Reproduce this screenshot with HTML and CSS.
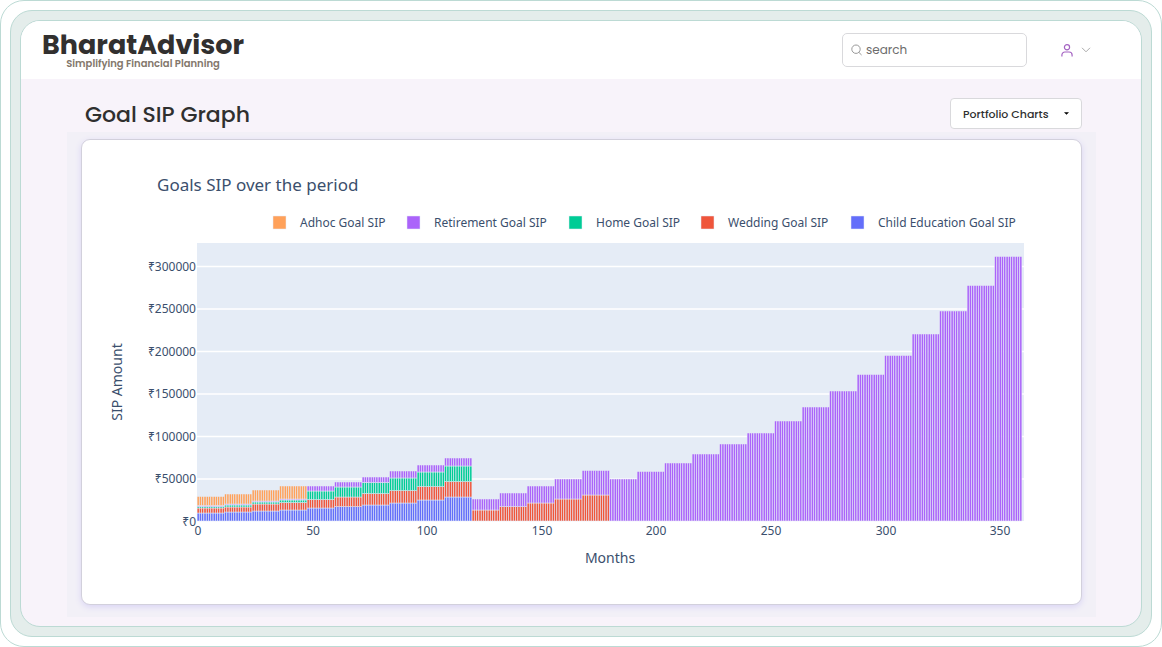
FILE: index.html
```html
<!DOCTYPE html>
<html lang="en">
<head>
<meta charset="utf-8">
<meta name="viewport" content="width=device-width, initial-scale=1">
<title>BharatAdvisor – Goal SIP Graph</title>
<link rel="stylesheet" href="styles.css">
</head>
<body>
<div class="frame">
  <div class="bezel">
    <div class="screen">
      <header class="topbar">
        <a class="brand" href="#">
          <span class="brand-name">BharatAdvisor</span>
          <span class="brand-tag">Simplifying Financial Planning</span>
        </a>
        <div class="tools">
          <label class="search">
            <svg class="search-icon" viewBox="0 0 12 12" aria-hidden="true"><circle cx="5" cy="5.2" r="4.2"/><path d="M8 8.5 10.6 11"/></svg>
            <input class="search-input" type="text" placeholder="search" aria-label="search">
          </label>
          <button class="user" type="button" aria-label="Account">
            <svg class="user-icon" viewBox="0 0 12 13" aria-hidden="true"><circle cx="6" cy="3.2" r="2.6"/><path d="M.9 12.5V11a3 3 0 0 1 3-3h4.2a3 3 0 0 1 3 3v1.5"/></svg>
            <svg class="chevron" viewBox="0 0 10 6" aria-hidden="true"><path d="M1 .8 5 4.8 9 .8"/></svg>
          </button>
        </div>
      </header>
      <main class="content">
        <div class="heading">
          <h1 class="title">Goal SIP Graph</h1>
          <div class="picker">
            <select class="picker-select" aria-label="Chart group"><option>Portfolio Charts</option></select>
            <svg class="caret" viewBox="0 0 6 3" aria-hidden="true"><path d="M0 0H6L3 3Z"/></svg>
          </div>
        </div>
        <div class="panel">
          <section class="card">
            <svg class="chart" id="chart" viewBox="0 0 999 464" role="img" aria-label="Goals SIP over the period">
              <text class="chart-title" x="75" y="51">Goals SIP over the period</text>
              <g id="legend"></g>
              <rect class="plot" x="115" y="103" width="827" height="278"/>
              <g id="grid"></g>
              <g id="bars"></g>
              <g id="ticks"></g>
              <text class="axis-title" x="528" y="423">Months</text>
              <text class="axis-title" transform="translate(40 242) rotate(-90)">SIP Amount</text>
            </svg>
          </section>
        </div>
      </main>
    </div>
  </div>
</div>
<script src="chart.js"></script>
</body>
</html>
```
FILE: styles.css
```css
* { box-sizing: border-box; }

body {
  margin: 0;
  background: #fff;
  color: #2f2f2f;
  font-family: Poppins, Inter, "Open Sans", sans-serif;
}

.frame {
  display: flex;
  min-height: 100vh;
  padding: 9px;
  border: 1px solid #bcdad4;
  border-radius: 24px;
}

.bezel {
  display: flex;
  flex: 1;
  min-width: 0;
  padding: 9px;
  border: 1px solid #bcdad4;
  border-radius: 22px;
  background: #e4edeb;
}

.screen {
  flex: 1;
  min-width: 0;
  overflow: hidden;
  border: 1px solid #bcdad4;
  border-radius: 20px;
  background: #f8f3fa;
}

.topbar {
  display: flex;
  justify-content: space-between;
  align-items: center;
  height: 58px;
  padding: 0 46px 0 21px;
  background: #fff;
}

.brand {
  display: flex;
  flex-direction: column;
  align-items: center;
  color: #32302f;
  text-decoration: none;
}

.brand-name {
  font-size: 27px;
  font-weight: 700;
  line-height: 28px;
}

.brand-tag {
  color: #83776b;
  font-size: 10px;
  font-weight: 600;
  line-height: 10px;
}

.tools {
  display: flex;
  align-items: center;
  gap: 30px;
}

.search {
  display: flex;
  align-items: center;
  gap: 3px;
  width: 185px;
  height: 34px;
  padding: 0 8px;
  border: 1px solid #d9d9dc;
  border-radius: 5px;
  background: #fff;
}

.search-icon {
  flex: none;
  width: 12px;
  height: 12px;
  fill: none;
  stroke: #999;
}

.search-input {
  flex: 1;
  min-width: 0;
  padding: 0;
  border: 0;
  outline: 0;
  background: none;
  color: #666;
  font: 12px/20px Poppins, Inter, "Open Sans", sans-serif;
}

.search-input::placeholder { color: #6c6c6c; opacity: 1; }

.user {
  display: flex;
  align-items: center;
  gap: 8px;
  padding: 4px;
  border: 0;
  background: none;
}

.user-icon {
  width: 12px;
  height: 13px;
  fill: none;
  stroke: #a463c2;
  stroke-width: 1.2;
}

.chevron {
  width: 10px;
  height: 6px;
  fill: none;
  stroke: #aaa;
}

.content { padding: 19px 45px 9px 46px; }

.heading {
  display: flex;
  justify-content: space-between;
  align-items: flex-start;
  padding: 0 14px 0 18px;
}

.title {
  margin: 0;
  font-size: 22px;
  font-weight: 500;
  line-height: 33px;
}

.picker { display: grid; align-items: center; width: 132px; }

.picker-select {
  grid-area: 1 / 1;
  height: 31px;
  padding: 0 12px;
  border: 1px solid #d9d9dc;
  border-radius: 4px;
  appearance: none;
  background: #fff;
  color: #2f2f2f;
  font: 500 11px/20px Poppins, Inter, "Open Sans", sans-serif;
}

.caret {
  grid-area: 1 / 1;
  justify-self: end;
  width: 5px;
  height: 3px;
  margin-right: 13px;
  pointer-events: none;
}

.panel {
  margin-top: 1px;
  padding: 7px 14px 12px;
  background: #f2f0f7;
}

.card {
  border: 1px solid #d2d0dc;
  border-radius: 9px;
  background: #fff;
  box-shadow: 0 2px 6px #d9d4f4;
}

.chart {
  display: block;
  width: 100%;
  height: auto;
  font-family: "Noto Sans", "Open Sans", sans-serif;
}

.chart text { fill: #3b4f6d; }
.chart-title { font-size: 17px; }
.axis-title { font-size: 14px; text-anchor: middle; }
.legend-label, .tick { font-size: 12px; }
.tick-y { text-anchor: end; }
.tick-x { text-anchor: middle; }
.plot { fill: #e5ecf6; }
.grid-line { stroke: #fff; stroke-width: 1.5; }
.bar { stroke: #e5ecf6; stroke-width: 0.5; }
.adhoc { fill: #ffa15a; }
.retirement { fill: #ab63fa; }
.home { fill: #00cc96; }
.wedding { fill: #ef553b; }
.education { fill: #636efa; }
```
FILE: chart.js
```js
const NS = "http://www.w3.org/2000/svg";
const LEFT = 115;
const BASE = 381;
const MONTH = 825 / 360;
const STEP = 42.5;

function add(parent, tag, attrs, text) {
  const node = document.createElementNS(NS, tag);
  for (const key in attrs) node.setAttribute(key, attrs[key]);
  if (text !== undefined) node.textContent = text;
  document.getElementById(parent).appendChild(node);
}

[
  ["adhoc", "Adhoc Goal SIP", 191],
  ["retirement", "Retirement Goal SIP", 325],
  ["home", "Home Goal SIP", 487],
  ["wedding", "Wedding Goal SIP", 619],
  ["education", "Child Education Goal SIP", 769]
].forEach(([name, label, x]) => {
  add("legend", "rect", { class: "bar " + name, x: x, y: 76, width: 13, height: 13 });
  add("legend", "text", { class: "legend-label", x: x + 27, y: 87 }, label);
});

for (let i = 0; i <= 6; i++) {
  const y = BASE - i * STEP;
  if (i) add("grid", "line", { class: "grid-line", x1: LEFT, x2: 942, y1: y + 0.5, y2: y + 0.5 });
  add("ticks", "text", { class: "tick tick-y", x: 114, y: Math.floor(y) + 5 }, "₹" + i * 50000);
}

for (let m = 0; m <= 350; m += 50) {
  add("ticks", "text", { class: "tick tick-x", x: Math.round(LEFT + 1 + m * MONTH), y: 395 }, m);
}

// Bar heights for each year: education, wedding, home, retirement, adhoc.
const series = ["education", "wedding", "home", "retirement", "adhoc"];
const years = [
  [8, 5, 1.5, 1, 9], [9, 5, 2, 1, 10], [10, 7, 2, 1, 11], [11, 7.5, 2.5, 1, 13],
  [13, 8.5, 8.5, 5], [14.5, 9.5, 10, 5], [16, 11.5, 11, 5.5], [18, 12.5, 12.5, 7],
  [21, 13.5, 14.5, 7], [24, 15.5, 15.5, 8],
  [0, 11, 0, 11], [0, 14.5, 0, 13.5], [0, 18, 0, 17], [0, 22, 0, 20], [0, 26, 0, 24.5],
  [0, 0, 0, 42], [0, 0, 0, 49.5], [0, 0, 0, 58], [0, 0, 0, 67], [0, 0, 0, 77],
  [0, 0, 0, 88], [0, 0, 0, 100], [0, 0, 0, 114], [0, 0, 0, 130], [0, 0, 0, 146.5],
  [0, 0, 0, 165.5], [0, 0, 0, 187], [0, 0, 0, 210], [0, 0, 0, 235.5], [0, 0, 0, 264.5]
];

for (let month = 0; month < 360; month++) {
  let y = BASE;
  years[Math.floor(month / 12)].forEach((height, i) => {
    if (!height) return;
    y -= height;
    add("bars", "rect", {
      class: "bar " + series[i],
      x: (LEFT + (month + 0.05) * MONTH).toFixed(2), y: y,
      width: (MONTH * 0.9).toFixed(2), height: height
    });
  });
}
```
